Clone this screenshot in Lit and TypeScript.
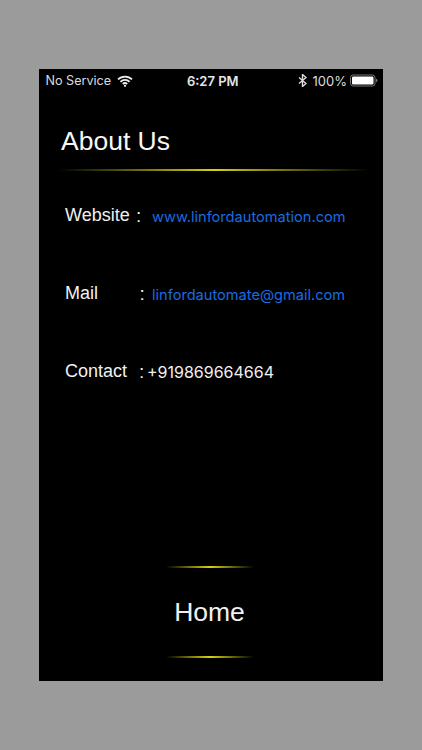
import { LitElement, html, css } from "lit";
import { customElement } from "lit/decorators.js";

@customElement("app-root")
export class AppRoot extends LitElement {
  static styles = css`
    :host { display: block; width: 422px; height: 750px; background: #9b9b9b; font-family: "Liberation Sans", Arial, sans-serif; padding: 69px 39px; box-sizing: border-box; }
    .phone { width: 344px; height: 612px; background: #000; color: #f0f0f0; display: flex; flex-direction: column; }
    .status { height: 23px; display: grid; grid-template-columns: 1fr auto 1fr; align-items: center; padding: 0 5px 0 6.5px; font-family: Inter, sans-serif; font-size: 12.6px; color: #dcdcdc; }
    .left, .right { display: flex; align-items: center; }
    .left { gap: 6px; }
    .right { justify-content: flex-end; }
    .time { font-weight: 600; font-size: 13px; color: #e6e6e6; margin-left: 2px; }
    .pct { font-size: 13px; }
    .bt { margin-right: 6px; }
    .batt { margin-left: 3px; }
    h1 { margin: 34px 0 0 22px; font-weight: 400; font-size: 26.5px; line-height: 30px; color: #f6f6f6; }
    .rule { height: 2px; background: linear-gradient(90deg, transparent, #d8d210 50%, transparent); }
    .top-rule { margin: 13px 14px 0 20px; }
    .rows { display: flex; flex-direction: column; gap: 57px; margin: 34px 0 0 26px; }
    .row { display: flex; align-items: center; height: 21px; font-size: 18px; white-space: nowrap; }
    .colon { font-size: 19px; }
    .w .label { width: 71px; }
    .w .colon { width: 16px; }
    .m .label { width: 74.5px; }
    .m .colon { width: 12.5px; }
    .c .label { width: 74px; }
    .c .colon { width: 8px; margin-top: 1px; }
    .link { font-family: Inter, sans-serif; font-size: 14.6px; color: #1a6ce0; margin-top: 3px; }
    .phone-no { font-family: Inter, sans-serif; color: #f0f0f0; font-size: 16px; }
    .foot { margin-top: auto; display: flex; flex-direction: column; align-items: center; padding-bottom: 23px; }
    .foot .rule { width: 88px; margin-left: -3px; }
    .home { height: 88px; display: flex; align-items: center; font-size: 26.5px; margin-left: -3px; color: #f0f0f0; }
  `;

  render() {
    return html`<div class="phone">
      <div class="status">
        <div class="left">
          <span>No Service</span>
          <svg width="16" height="12" viewBox="0 0 16 12" fill="none" stroke="#eee" stroke-width="1.8">
            <path d="M1 4.4a10 10 0 0 1 14 0"/><path d="M3.4 6.8a6.6 6.6 0 0 1 9.2 0"/><path d="M5.8 9a3.2 3.2 0 0 1 4.4 0"/>
            <circle cx="8" cy="10.8" r="1.1" fill="#eee" stroke="none"/>
          </svg>
        </div>
        <div class="time">6:27 PM</div>
        <div class="right">
          <svg class="bt" width="9" height="13" viewBox="0 0 9 13" fill="none" stroke="#ddd" stroke-width="1.4">
            <path d="M1 3.5l7 6-3.5 3V.5L8 3.5l-7 6"/>
          </svg>
          <span class="pct">100%</span>
          <svg class="batt" width="28" height="13" viewBox="0 0 28 13">
            <rect x=".5" y="1" width="24.5" height="11" rx="2.5" fill="none" stroke="#777"/>
            <rect x="2" y="2.5" width="21.5" height="8" rx="1.2" fill="#fff"/>
            <path d="M26 4.8c1 .2 1.5.9 1.5 1.7s-.5 1.5-1.5 1.7z" fill="#777"/>
          </svg>
        </div>
      </div>
      <h1>About Us</h1>
      <div class="rule top-rule"></div>
      <div class="rows">
        <div class="row w"><span class="label">Website</span><span class="colon">:</span><span class="link">www.linfordautomation.com</span></div>
        <div class="row m"><span class="label">Mail</span><span class="colon">:</span><span class="link">linfordautomate@gmail.com</span></div>
        <div class="row c"><span class="label">Contact</span><span class="colon">:</span><span class="phone-no">+919869664664</span></div>
      </div>
      <div class="foot">
        <div class="rule"></div>
        <div class="home">Home</div>
        <div class="rule"></div>
      </div>
    </div>`;
  }
}
